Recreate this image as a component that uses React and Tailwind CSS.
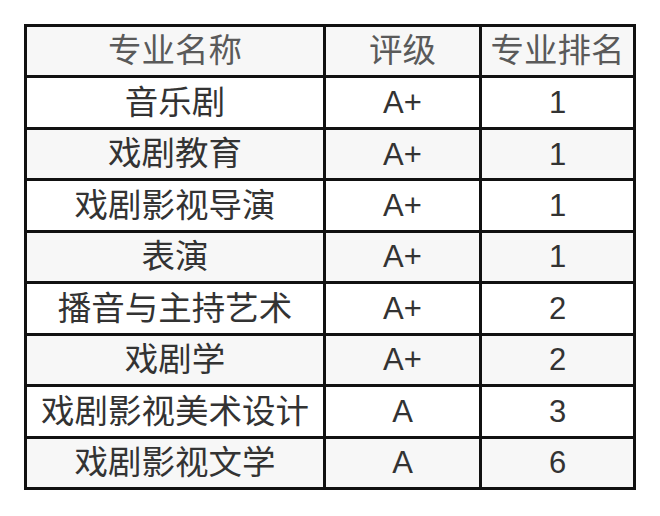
const rows = [
  ["音乐剧", "A+", "1"],
  ["戏剧教育", "A+", "1"],
  ["戏剧影视导演", "A+", "1"],
  ["表演", "A+", "1"],
  ["播音与主持艺术", "A+", "2"],
  ["戏剧学", "A+", "2"],
  ["戏剧影视美术设计", "A", "3"],
  ["戏剧影视文学", "A", "6"],
];

const font = { fontFamily: '"Liberation Sans", "Noto Sans CJK SC", sans-serif' };

export default function App() {
  return (
    <div className="w-[660px] h-[516px] bg-white pt-[24px] pl-[24px]" style={font}>
      <div className="grid grid-cols-[296px_153px_151px] auto-rows-fr gap-[3px] p-[3px] bg-[#111] w-[612px] h-[466px] text-[31px] leading-none">
        <div className="bg-[#f7f7f7] text-[#5a5a5a] text-[33.5px] flex items-center justify-center">专业名称</div>
        <div className="bg-[#f7f7f7] text-[#5a5a5a] text-[33.5px] flex items-center justify-center">评级</div>
        <div className="bg-[#f7f7f7] text-[#5a5a5a] text-[33.5px] flex items-center justify-center">专业排名</div>
        {rows.map((r, i) =>
          r.map((cell, j) => (
            <div
              key={i + "-" + j}
              className={
                "flex items-center justify-center text-[#333] " +
                (j === 0 ? "text-[33.5px] " : "") +
                (i % 2 === 0 ? "bg-white" : "bg-[#f7f7f7]")
              }
            >
              {cell}
            </div>
          ))
        )}
      </div>
    </div>
  );
}
